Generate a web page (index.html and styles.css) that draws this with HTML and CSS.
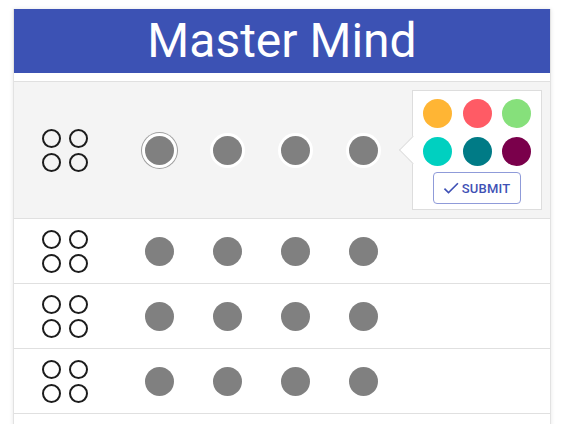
FILE: index.html
```html
<!DOCTYPE html>
<html lang="en">
<head>
    <meta charset="UTF-8">
    <meta name="viewport" content="width=device-width, initial-scale=1.0">
    <link rel="stylesheet" href="styles.css">
</head>
<body>

<div class="app">
    <header>
        <h1>Master Mind</h1>
    </header>

    <div class="board" id="board">
        <!-- активная попытка -->
        <div class="row active">
            <div class="hints">
                <span></span><span></span><span></span><span></span>
            </div>
            <div class="pegs">
                <div class="cell"><div class="peg selected"></div></div>
                <div class="cell"><div class="peg"></div></div>
                <div class="cell"><div class="peg"></div></div>
                <div class="cell"><div class="peg"></div></div>
            </div>
            <div class="picker">
                <div class="swatches">
                    <div class="swatch orange"></div>
                    <div class="swatch red"></div>
                    <div class="swatch green"></div>
                    <div class="swatch teal"></div>
                    <div class="swatch petrol"></div>
                    <div class="swatch plum"></div>
                </div>
                <button class="submit">
                    <svg viewBox="0 0 24 24" width="20" height="20"><path d="M9 16.17L4.83 12l-1.42 1.41L9 19 21 7l-1.41-1.41z" fill="currentColor"/></svg>
                    SUBMIT
                </button>
            </div>
        </div>
    </div>
</div>

<script>
    // остальные попытки - пустые строки
    const board = document.getElementById('board');
    for (let i = 0; i < 9; i++) {
        board.insertAdjacentHTML('beforeend', `
            <div class="row">
                <div class="hints">
                    <span></span><span></span><span></span><span></span>
                </div>
                <div class="pegs">
                    <div class="cell"><div class="peg"></div></div>
                    <div class="cell"><div class="peg"></div></div>
                    <div class="cell"><div class="peg"></div></div>
                    <div class="cell"><div class="peg"></div></div>
                </div>
            </div>
        `);
    }
</script>

</body>
</html>
```

FILE: styles.css
```css
body {
    font-family: 'Roboto', 'Liberation Sans', sans-serif;
    margin: 0;
    padding: 0;
    background: #ffffff;
    color: #222222;
}

.app {
    margin: 9px 13px 0;
    border: 1px solid #e2e2e2;
    border-top: none;
    background: #ffffff;
    box-shadow: 0 0 4px rgba(0, 0, 0, 0.1);
}

header {
    background-color: #3c52b4;
    height: 64px;
    text-align: center;
}

header h1 {
    margin: 0;
    color: #ffffff;
    font-size: 48px;
    font-weight: 400;
    line-height: 64px;
}

.board {
    padding-top: 8px;
}

.row {
    display: flex;
    align-items: center;
    height: 64px;
    border-top: 1px solid #e0e0e0;
    padding-left: 28px;
}

.row.active {
    height: auto;
    padding-top: 8px;
    padding-bottom: 8px;
    background-color: #f4f4f4;
}

.hints {
    display: grid;
    grid-template-columns: 19px 19px;
    column-gap: 8px;
    row-gap: 5px;
}

.hints span {
    width: 19px;
    height: 19px;
    box-sizing: border-box;
    border: 2px solid #1c1c1c;
    border-radius: 50%;
}

.pegs {
    display: flex;
    margin-left: 37px;
}

.cell {
    width: 68px;
    display: flex;
    justify-content: center;
}

.peg {
    width: 29px;
    height: 29px;
    border-radius: 50%;
    background-color: #808080;
}

.active .peg {
    box-shadow: 0 0 0 3px #ffffff;
}

.active .peg.selected {
    box-shadow: 0 0 0 3px #ffffff, 0 0 0 4px #a0a0a0;
}

.picker {
    position: relative;
    margin-left: 15px;
    width: 128px;
    padding: 8px 0 5px;
    background: #ffffff;
    border: 1px solid #dddddd;
    display: flex;
    flex-direction: column;
    align-items: center;
}

.picker::before {
    content: '';
    position: absolute;
    left: -10px;
    top: 50%;
    width: 19px;
    height: 19px;
    margin-top: -10px;
    background: #ffffff;
    border-left: 1px solid #dddddd;
    border-bottom: 1px solid #dddddd;
    transform: rotate(45deg);
}

.swatches {
    position: relative;
    display: grid;
    grid-template-columns: repeat(3, 29px);
    column-gap: 10.5px;
    row-gap: 9px;
}

.swatch {
    width: 29px;
    height: 29px;
    border-radius: 50%;
}

.orange { background-color: #ffb534; }
.red { background-color: #ff5b65; }
.green { background-color: #86e07b; }
.teal { background-color: #00d0c0; }
.petrol { background-color: #007b86; }
.plum { background-color: #7a004b; }

.submit {
    margin-top: 6px;
    height: 32px;
    display: flex;
    align-items: center;
    gap: 1px;
    padding: 0 10px 0 7px;
    background: #ffffff;
    border: 1px solid #8f9bd9;
    border-radius: 4px;
    color: #3f51b5;
    font-family: 'Roboto', 'Liberation Sans', sans-serif;
    font-size: 13px;
    font-weight: 500;
    letter-spacing: 0.2px;
}
```
